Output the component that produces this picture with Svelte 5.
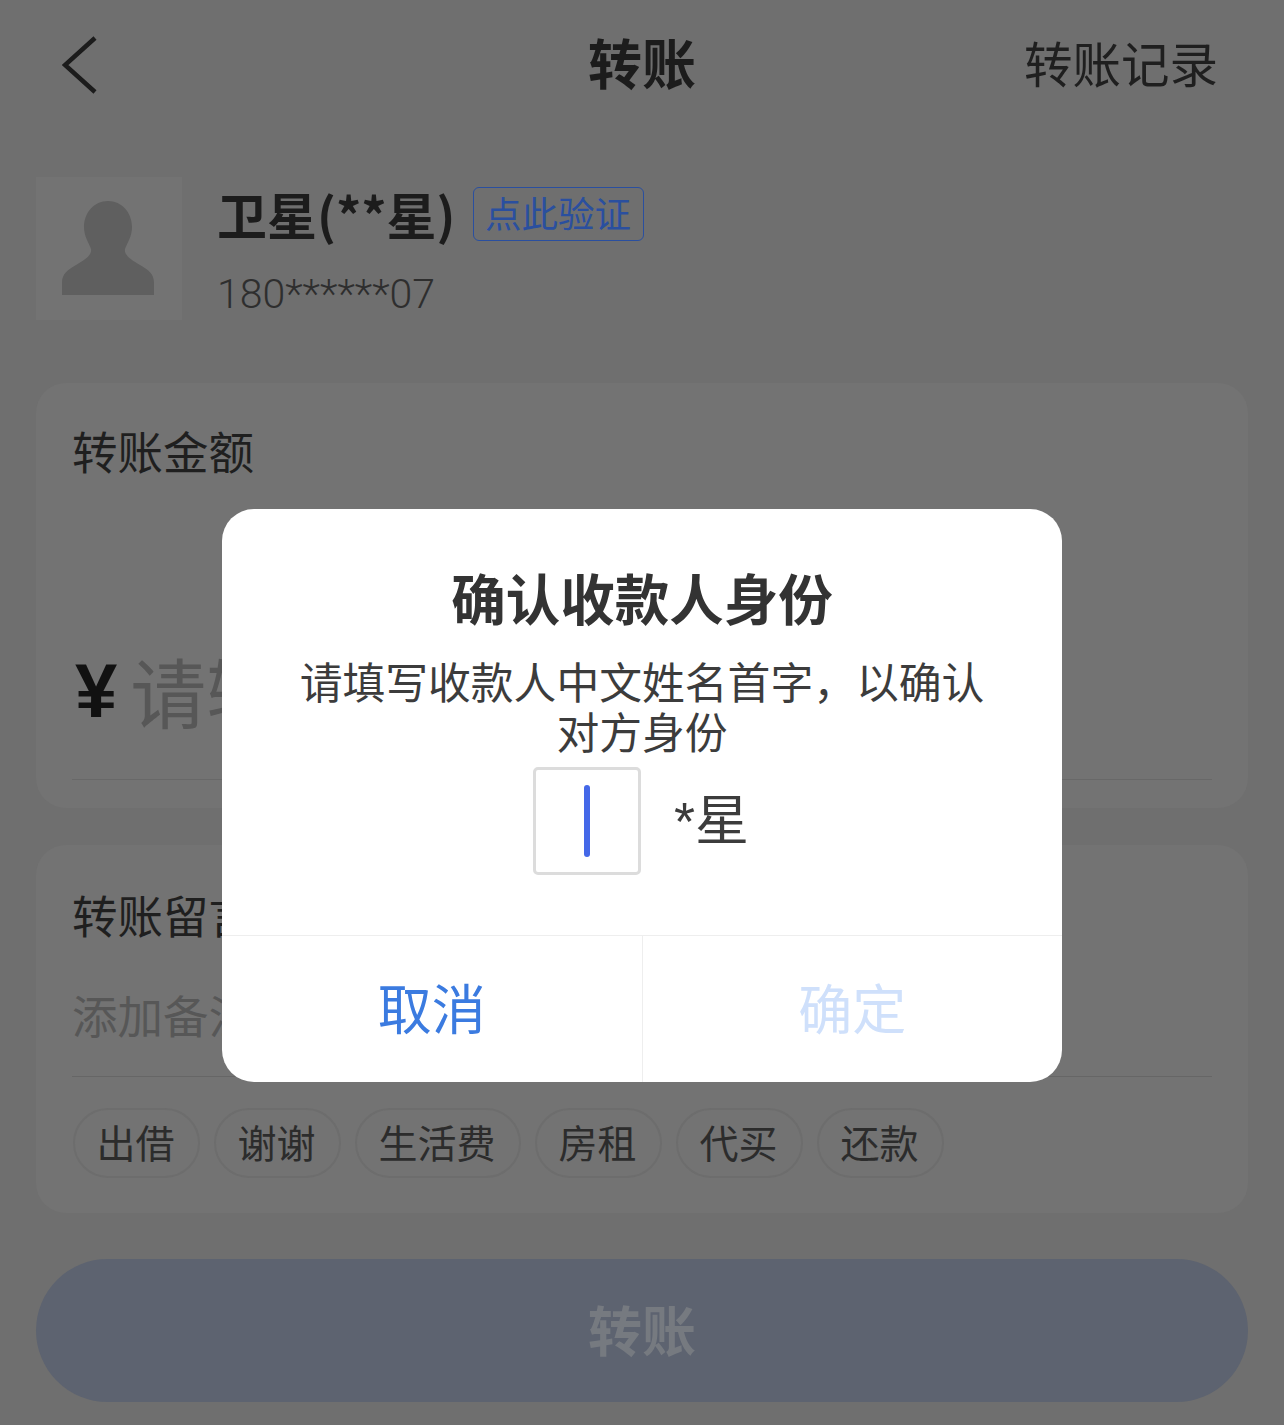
<script>
  const chips = ["出借", "谢谢", "生活费", "房租", "代买", "还款"];
</script>

<div class="page">
  <header class="nav">
    <svg class="back" viewBox="0 0 36 58" width="36" height="58" aria-hidden="true">
      <path d="M33 2 L3 29 L33 56" fill="none" stroke="#1c1c1c" stroke-width="4.5" />
    </svg>
    <h1>转账</h1>
    <span class="history">转账记录</span>
  </header>

  <section class="payee">
    <div class="avatar">
      <svg viewBox="0 0 146 143" width="146" height="143" aria-hidden="true">
        <path
          d="M72 24 C86 24 96 36 96 50 C96 60 91 66 89 72 C88 78 94 82 104 88 C112 93 118 96 118 106 V118 H26 V106 C26 96 32 93 40 88 C50 82 56 78 55 72 C53 66 48 60 48 50 C48 36 58 24 72 24 Z"
          fill="#5f5f5f"
        />
      </svg>
    </div>
    <div class="who">
      <div class="name-row">
        <span class="name">卫星(**星)</span>
        <span class="verify">点此验证</span>
      </div>
      <div class="phone">180******07</div>
    </div>
  </section>

  <section class="card amount">
    <div class="label">转账金额</div>
    <div class="amount-row">
      <span class="yen">¥</span>
      <span class="amount-hint">请输入金额</span>
    </div>
  </section>

  <section class="card note">
    <div class="label">转账留言</div>
    <div class="note-input">添加备注</div>
    <div class="chips">
      {#each chips as chip}
        <span class="chip">{chip}</span>
      {/each}
    </div>
  </section>

  <button class="submit">转账</button>
</div>

<div class="dialog" role="dialog">
  <div class="dialog-body">
    <h2>确认收款人身份</h2>
    <p>请填写收款人中文姓名首字&#xFF0C;以确认<br />对方身份</p>
    <div class="verify-row">
      <div class="box"><i class="caret"></i></div>
      <span class="rest">*星</span>
    </div>
  </div>
  <div class="actions">
    <button class="cancel">取消</button>
    <button class="confirm">确定</button>
  </div>
</div>

<style>
  :global(body) {
    margin: 0;
    background: #6f6f6f;
  }

  .page {
    position: relative;
    box-sizing: border-box;
    width: 1284px;
    height: 1425px;
    padding: 0 36px;
    background: #6f6f6f;
    font-family: "Noto Sans CJK SC", "Liberation Sans", sans-serif;
    color: #1f1f1f;
    overflow: hidden;
  }

  .nav {
    display: flex;
    align-items: center;
    justify-content: space-between;
    height: 130px;
    padding: 0 30px 0 26px;
    position: relative;
  }

  .back {
    display: block;
  }

  h1 {
    position: absolute;
    left: 0;
    right: 0;
    top: 24px;
    margin: 0;
    text-align: center;
    font-size: 54px;
    line-height: 76px;
    font-weight: 700;
    color: #1c1c1c;
  }

  .history {
    font-size: 48.5px;
    line-height: 70px;
    margin-top: -6px;
    color: #1f1f1f;
  }

  .payee {
    display: flex;
    margin-top: 47px;
    height: 143px;
  }

  .avatar {
    width: 146px;
    height: 143px;
    background: #737373;
  }

  .avatar svg {
    display: block;
  }

  .who {
    margin-left: 35px;
  }

  .name-row {
    display: flex;
    align-items: center;
    height: 80px;
  }

  .name {
    padding-bottom: 8px;
    font-size: 50px;
    line-height: 80px;
    font-weight: 700;
    color: #1c1c1c;
  }

  .verify {
    box-sizing: border-box;
    width: 171px;
    height: 54px;
    margin-left: 17px;
    margin-top: -6px;
    border: 1.5px solid #2a4f9f;
    border-radius: 6px;
    color: #2a4f9f;
    font-size: 36.5px;
    line-height: 50px;
    text-align: center;
  }

  .phone {
    font-family: Roboto, "Liberation Sans", sans-serif;
    font-weight: 300;
    font-size: 41px;
    line-height: 52px;
    margin-top: 11px;
    color: #2e2e2e;
  }

  .card {
    box-sizing: border-box;
    background: #737373;
    border-radius: 30px;
    padding: 0 36px;
  }

  .amount {
    height: 425px;
    margin-top: 63px;
  }

  .label {
    font-size: 45.5px;
    line-height: 64px;
    color: #1f1f1f;
  }

  .amount .label {
    padding-top: 35px;
  }

  .amount-row {
    display: flex;
    align-items: center;
    height: 120px;
    margin-top: 148px;
    padding-bottom: 29px;
    border-bottom: 1px solid #686868;
    overflow: hidden;
  }

  .yen {
    font-family: "Liberation Sans", sans-serif;
    font-weight: 700;
    font-size: 76px;
    color: #111;
    margin-left: 3px;
  }

  .amount-hint {
    margin-left: 13px;
    font-size: 76px;
    line-height: 100px;
    color: #575757;
  }

  .note {
    height: 368px;
    margin-top: 37px;
    padding-top: 37px;
  }

  .note-input {
    height: 99px;
    margin-top: 31px;
    border-bottom: 1px solid #666;
    font-size: 45.5px;
    line-height: 74px;
    color: #575757;
  }

  .chips {
    display: flex;
    gap: 14px;
    margin: 31px 0 0 1px;
  }

  .chip {
    box-sizing: border-box;
    height: 70px;
    padding: 0 23.5px 0 21.5px;
    border: 2px solid #6d6d6d;
    border-radius: 35px;
    font-size: 39px;
    line-height: 62px;
    color: #2c2c2c;
  }

  .submit {
    display: block;
    width: 1212px;
    height: 143px;
    margin-top: 46px;
    padding: 0 0 4px;
    border: none;
    border-radius: 72px;
    background: #5d6370;
    color: #767a80;
    font-family: inherit;
    font-size: 54px;
    font-weight: 700;
  }

  .dialog {
    position: absolute;
    left: 222px;
    top: 509px;
    width: 840px;
    height: 573px;
    display: flex;
    flex-direction: column;
    background: #fff;
    border-radius: 32px;
    overflow: hidden;
    font-family: "Noto Sans CJK SC", "Liberation Sans", sans-serif;
  }

  .dialog-body {
    flex: 1;
    text-align: center;
  }

  h2 {
    margin: 48px 0 0;
    font-size: 54.5px;
    line-height: 80px;
    font-weight: 700;
    color: #333;
  }

  p {
    margin: 18px 0 0;
    font-size: 42.8px;
    line-height: 50px;
    color: #3c3c3c;
  }

  .verify-row {
    display: flex;
    justify-content: center;
    align-items: center;
    gap: 33px;
    margin-top: 12px;
    padding-right: 2px;
  }

  .box {
    box-sizing: border-box;
    display: flex;
    justify-content: center;
    align-items: center;
    width: 108px;
    height: 108px;
    border: 3px solid #dcdcdc;
    border-radius: 5px;
  }

  .caret {
    display: block;
    width: 6px;
    height: 72px;
    border-radius: 3px;
    background: #4468e8;
  }

  .rest {
    font-size: 54px;
    line-height: 70px;
    color: #3c3c3c;
    font-family: "Liberation Sans", "Noto Sans CJK SC", sans-serif;
  }

  .actions {
    display: flex;
    height: 146px;
    border-top: 1px solid #eeeeee;
  }

  .actions button {
    flex: 1;
    border: none;
    background: none;
    padding: 0 0 5px;
    font-family: inherit;
    font-size: 54px;
    font-weight: 400;
  }

  .actions .cancel {
    color: #3b7be0;
    border-right: 1px solid #eeeeee;
  }

  .confirm {
    color: #cfe0fb;
  }
</style>
